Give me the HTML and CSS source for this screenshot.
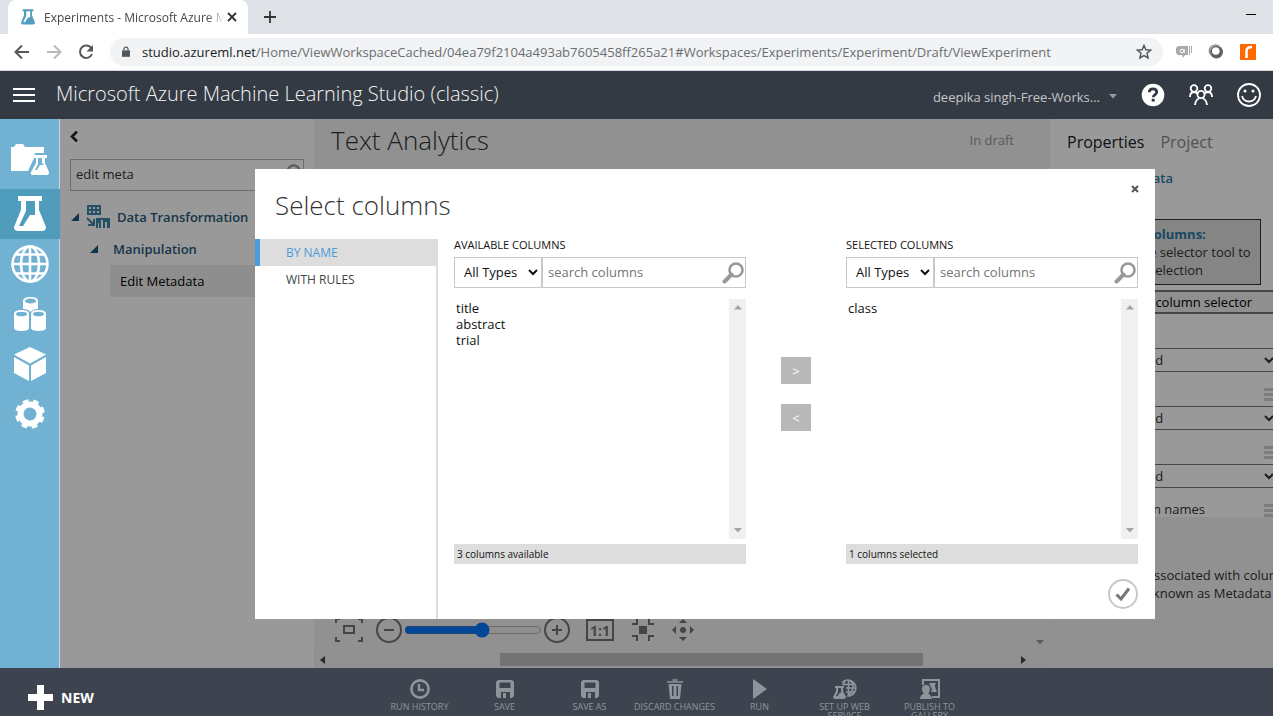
FILE: index.html
```html
<!DOCTYPE html>
<html lang="en">
<head>
    <meta charset="UTF-8">
    <meta name="viewport" content="width=device-width, initial-scale=1.0">
    <title>Experiments - Microsoft Azure Machine Learning Studio</title>
    <link rel="stylesheet" href="styles.css">
</head>
<body>

    <!-- Shared icons -->
    <svg class="sprite" aria-hidden="true">
        <symbol id="flask" viewBox="0 0 32 36">
            <path fill-rule="evenodd" d="M4 0h24v5h-3v9l7 17q0 4-4 4H4q-4 0-4-4l7-17V5H4zM12 5v10L5 30h4l7-11h5V5z"/>
        </symbol>
        <symbol id="globe" viewBox="0 0 38 38">
            <g fill="none" stroke="currentColor" stroke-width="2.6">
                <circle cx="19" cy="19" r="17.5"/>
                <ellipse cx="19" cy="19" rx="9" ry="17.5"/>
                <path d="M19 1v36M1.500 19h35M5 9.500h28M5 28.500h28"/>
            </g>
        </symbol>
        <symbol id="search" viewBox="0 0 22 22">
            <circle cx="14" cy="8" r="6.500" fill="none" stroke="currentColor" stroke-width="2.600"/>
            <path d="M9.500 12.500L2.500 19.500" stroke="currentColor" stroke-width="4" stroke-linecap="round"/>
        </symbol>
        <symbol id="disk" viewBox="0 0 18 18">
            <path fill-rule="evenodd" d="M2 0h14l2 2v14l-2 2h-2v-6H5v6H2l-2-2V2zM3.500 2.500v5.500h11V2.500zM7 13h3v5H7z"/>
        </symbol>
    </svg>

    <!-- Browser tabs -->
    <div class="tab-strip">
        <div class="tab">
            <svg class="tab-icon" width="14" height="16"><use href="#flask"/></svg>
            <span class="tab-title">Experiments - Microsoft Azure M</span>
            <button class="plain-btn" aria-label="Close tab">
                <svg width="10" height="10" viewBox="0 0 10 10"><path d="M1 1l8 8M9 1l-8 8" stroke="#333" stroke-width="1.800"/></svg>
            </button>
        </div>
        <button class="plain-btn new-tab" aria-label="New tab">
            <svg width="12" height="12" viewBox="0 0 12 12"><path d="M6 0v12M0 6h12" stroke="#333" stroke-width="1.800"/></svg>
        </button>
        <button class="plain-btn minimize" aria-label="Minimize">
            <svg width="10" height="2" viewBox="0 0 10 2"><path d="M0 .5h10" stroke="#000"/></svg>
        </button>
    </div>

    <!-- Browser toolbar -->
    <div class="toolbar">
        <button class="plain-btn" aria-label="Back">
            <svg width="16" height="16" viewBox="0 0 16 16"><path d="M15 8H2M8 1.500L1.500 8 8 14.500" fill="none" stroke="#54575b" stroke-width="2"/></svg>
        </button>
        <button class="plain-btn" aria-label="Forward">
            <svg width="16" height="16" viewBox="0 0 16 16"><path d="M1 8h13M8 1.500L14.500 8 8 14.500" fill="none" stroke="#bababa" stroke-width="2"/></svg>
        </button>
        <button class="plain-btn" aria-label="Reload">
            <svg width="16" height="16" viewBox="0 0 16 16"><path d="M13.500 4.500A6.200 6.200 0 1 0 14 10" fill="none" stroke="#54575b" stroke-width="2"/><path d="M15 1v6.500H8.500z" fill="#54575b"/></svg>
        </button>
        <div class="address-bar">
            <svg width="8" height="12" viewBox="0 0 10 14"><path d="M0 5h10v8H0z" fill="#54575b"/><path d="M2.500 5.500V3.500a2.500 2.500 0 0 1 5 0v2" fill="none" stroke="#54575b" stroke-width="1.500"/></svg>
            <span class="url"><b>studio.azureml.net</b>/Home/ViewWorkspaceCached/04ea79f2104a493ab7605458ff265a21#Workspaces/Experiments/Experiment/Draft/ViewExperiment</span>
            <svg width="16" height="16" viewBox="0 0 16 16"><path d="M8 1.500l1.900 4.300 4.700.4-3.600 3.100 1.100 4.600L8 11.500l-4.100 2.400L5 9.300 1.400 6.200l4.700-.4z" fill="none" stroke="#54575b" stroke-width="1.500"/></svg>
        </div>
        <svg class="ext" width="16" height="16" viewBox="0 0 16 16"><path d="M2 2h10v9H9l-2 3-1-3H2L0 9V4z" fill="#aaa"/><path d="M13.500 2v9M15.500 2v7" stroke="#aaa"/><circle cx="6" cy="7" r="1.800" fill="none" stroke="#fff"/><path d="M8.200 5v4" stroke="#fff"/></svg>
        <svg class="ext" width="16" height="16" viewBox="0 0 16 16"><circle cx="8.500" cy="8" r="6.500" fill="#606060"/><path d="M2.800 11A6 6 0 0 1 12 3" fill="none" stroke="#999" stroke-width="1.500"/><circle cx="7.800" cy="7" r="3.800" fill="#fff"/></svg>
        <svg class="ext" width="16" height="16" viewBox="0 0 16 16"><path d="M0 0h16v16H0z" fill="#ff6a00"/><path d="M6.500 14V7q0-4 5.500-4" fill="none" stroke="#fff" stroke-width="2.600"/></svg>
    </div>

    <!-- App header -->
    <header class="app-header">
        <button class="plain-btn" aria-label="Menu">
            <svg width="22" height="14" viewBox="0 0 22 14"><path d="M0 1h22M0 7h22M0 13h22" stroke="#fff" stroke-width="2"/></svg>
        </button>
        <h1>Microsoft Azure Machine Learning Studio (classic)</h1>
        <button class="plain-btn workspace-menu">deepika singh-Free-Works...
            <svg width="8" height="5" viewBox="0 0 8 5"><path d="M0 0h8L4 4.500z" fill="#999"/></svg>
        </button>
        <button class="plain-btn help" aria-label="Help">
            <svg width="24" height="24" viewBox="0 0 24 24"><circle cx="12" cy="12" r="11.300" fill="#fff"/><path d="M8.300 9.300q0-3.500 3.700-3.500t3.700 3.200q0 1.700-1.700 2.700t-1.700 2.500" fill="none" stroke="#343a43" stroke-width="2.800"/><path d="M10.700 15.800h3v2.800h-3z" fill="#343a43"/></svg>
        </button>
        <button class="plain-btn" aria-label="Community">
            <svg width="24" height="22" viewBox="0 0 24 22"><g fill="none" stroke="#fff" stroke-width="1.800"><circle cx="5" cy="4.500" r="3.300"/><circle cx="19" cy="4.500" r="3.300"/><circle cx="12" cy="10.500" r="3.600"/><path d="M1 13q0-4.500 3.500-5 3 0 4.500 2M23 13q0-4.500-3.500-5-3 0-4.500 2M6 21q.5-5 4-6.500M18 21q-.5-5-4-6.500"/></g></svg>
        </button>
        <button class="plain-btn" aria-label="Feedback">
            <svg width="24" height="24" viewBox="0 0 24 24"><circle cx="12" cy="12" r="11" fill="none" stroke="#fff" stroke-width="1.800"/><circle cx="8" cy="8" r="1.500" fill="#fff"/><circle cx="16" cy="8" r="1.500" fill="#fff"/><path d="M5 13q1.500 5.500 7 5.500t7-5.500" fill="none" stroke="#fff" stroke-width="1.800"/></svg>
        </button>
    </header>

    <div class="main">
        <!-- Icon rail -->
        <nav class="rail">
            <a href="#" class="projects" aria-label="Projects">
                <svg width="40" height="32" viewBox="0 0 40 32"><path d="M1 3h3l2-3h7l2 3h19v24H1z" fill="#fff"/><path d="M25 9h13v6l3 13-2 4H19l-1-5 6-13z" fill="#71b1d1"/><path fill-rule="evenodd" d="M24 11h13v3h-2v5l4 9q0 3-2 3H23q-3 0-2-3l5-9v-5h-2zM28 14v6l-3 6h2l3-5h4l-2-2v-5z" fill="#fff"/></svg>
            </a>
            <a href="#" class="active" aria-label="Experiments"><svg width="32" height="36"><use href="#flask"/></svg></a>
            <a href="#" aria-label="Web services"><svg width="38" height="38"><use href="#globe"/></svg></a>
            <a href="#" aria-label="Datasets">
                <svg width="32" height="36" viewBox="0 0 32 36"><g fill="#fff"><path d="M9 5q0-4 7.500-4T24 5v8q-5 0-7.500 3Q14 13 9 13z"/><path d="M0 18q0-4 7.500-4t7.500 4v14q0 3-7.500 3T0 32zM17 18q0-4 7.500-4t7.500 4v14q0 3-7.500 3T17 32z"/></g><g fill="#71b1d1"><ellipse cx="16.500" cy="5" rx="5.500" ry="2.500"/><ellipse cx="7.500" cy="18" rx="5.500" ry="2.300"/><ellipse cx="24.500" cy="18" rx="5.500" ry="2.300"/></g></svg>
            </a>
            <a href="#" aria-label="Trained models">
                <svg width="32" height="34" viewBox="0 0 32 34"><path d="M16 0l16 7.500L16 16.500 0 7.500zM0 10l15 8.500V34L0 26zM32 10l-15 8.500V34l15-8z" fill="#fff"/></svg>
            </a>
            <a href="#" aria-label="Settings">
                <svg width="30" height="30" viewBox="0 0 30 30"><g transform="rotate(12 15 15)"><circle cx="15" cy="15" r="9.500" fill="none" stroke="#fff" stroke-width="6"/><circle cx="15" cy="15" r="12.800" fill="none" stroke="#fff" stroke-width="4" stroke-dasharray="5.600 4.450"/></g></svg>
            </a>
        </nav>

        <div class="workspace">
            <!-- Module palette -->
            <aside class="palette">
                <button class="plain-btn collapse" aria-label="Collapse">
                    <svg width="8" height="11" viewBox="0 0 8 11"><path d="M7 .5L2 5.500l5 5" fill="none" stroke="#222" stroke-width="2.600"/></svg>
                </button>
                <div class="palette-search">
                    <input type="text" value="edit meta" aria-label="Search experiment items">
                    <svg width="20" height="20"><use href="#search"/></svg>
                </div>
                <ul class="tree">
                    <li class="tree-group">
                        <svg width="8" height="8" viewBox="0 0 8 8"><path d="M8 0v8H0z" fill="#19597a"/></svg>
                        <svg width="24" height="24" viewBox="0 0 24 24" class="group-icon"><path fill-rule="evenodd" d="M1 0h14v10H1zM3 2v2h2V2zM7 2v2h2V2zM11 2v2h2V2zM3 6v2h2V6zM7 6v2h2V6zM11 6v2h2V6zM10 13h14v10h-3v-6h-2v6h-2v-8h-2v8h-2v-5h-1v5h-2z"/><path d="M1 13l6 6M8 14v6H2" fill="none" stroke="#3f88aa" stroke-width="2"/></svg>
                        Data Transformation
                    </li>
                    <li class="tree-sub">
                        <svg width="8" height="8" viewBox="0 0 8 8"><path d="M8 0v8H0z" fill="#19597a"/></svg>
                        Manipulation
                    </li>
                    <li class="tree-leaf">Edit Metadata</li>
                </ul>
            </aside>

            <!-- Experiment canvas -->
            <section class="canvas">
                <div class="canvas-head">
                    <h2>Text Analytics</h2>
                    <span>In draft</span>
                </div>
                <div class="zoom-bar">
                    <button class="plain-btn" aria-label="Fit to screen">
                        <svg width="28" height="24" viewBox="0 0 28 24"><path d="M1 5V1h4M23 1h4v4M27 19v4h-4M5 23H1v-4M9 8h10v7H9z" fill="none" stroke="#737373" stroke-width="2"/></svg>
                    </button>
                    <button class="plain-btn zoom-out" aria-label="Zoom out">
                        <svg width="26" height="26" viewBox="0 0 26 26"><circle cx="13" cy="13" r="12" fill="none" stroke="#737373" stroke-width="2"/><path d="M8 13h10" stroke="#737373" stroke-width="2"/></svg>
                    </button>
                    <input type="range" min="0" max="100" value="57" aria-label="Zoom">
                    <button class="plain-btn" aria-label="Zoom in">
                        <svg width="26" height="26" viewBox="0 0 26 26"><circle cx="13" cy="13" r="12" fill="none" stroke="#737373" stroke-width="2"/><path d="M8 13h10M13 8v10" stroke="#737373" stroke-width="2"/></svg>
                    </button>
                    <button class="plain-btn actual-size">1:1</button>
                    <button class="plain-btn center-btn" aria-label="Center">
                        <svg width="22" height="22" viewBox="0 0 22 22"><path d="M7 7h8v8H7z" fill="#737373"/><path d="M5 0v5H0M17 0v5h5M0 17h5v5M22 17h-5v5" fill="none" stroke="#737373" stroke-width="2"/></svg>
                    </button>
                    <button class="plain-btn" aria-label="Pan">
                        <svg width="22" height="22" viewBox="0 0 22 22"><circle cx="11" cy="11" r="3" fill="#737373"/><path d="M7 4l4-4 4 4zM7 18l4 4 4-4zM4 7l-4 4 4 4zM18 7l4 4-4 4z" fill="#737373"/></svg>
                    </button>
                    <svg class="scroll-down" width="8" height="5" viewBox="0 0 8 5"><path d="M0 0h8L4 4.500z" fill="#999"/></svg>
                </div>
                <div class="h-scroll">
                    <svg width="5" height="8" viewBox="0 0 5 8"><path d="M5 0v8L0 4z" fill="#444"/></svg>
                    <div class="h-thumb"></div>
                    <svg width="5" height="8" viewBox="0 0 5 8"><path d="M0 0v8l5-4z" fill="#444"/></svg>
                </div>
            </section>

            <!-- Properties -->
            <aside class="properties">
                <div class="prop-form">
                    <div class="prop-tabs"><a href="#" class="current">Properties</a><a href="#">Project</a></div>
                    <h3>Edit Metadata</h3>
                    <div class="hint"><b>Selected columns:</b><br>Launch the selector tool to<br>make the selection</div>
                    <button class="launch">Launch column selector</button>
                    <div class="field">
                        <select aria-label="Data type"><option>Unchanged</option></select>
                        <span class="grip"></span>
                    </div>
                    <div class="field">
                        <select aria-label="Categorical"><option>Unchanged</option></select>
                        <span class="grip"></span>
                    </div>
                    <div class="field">
                        <select aria-label="Fields"><option>Unchanged</option></select>
                        <span class="grip"></span>
                    </div>
                    <p class="names">New column names</p>
                </div>
                <p class="about">All metadata associated with columns<br>(or previously known as Metadata</p>
            </aside>

            <div class="overlay"></div>

            <!-- Select columns dialog -->
            <div class="dialog" role="dialog" aria-labelledby="dialog-title">
                <div class="dialog-head">
                    <h2 id="dialog-title">Select columns</h2>
                    <button class="plain-btn" aria-label="Close">
                        <svg width="8" height="8" viewBox="0 0 8 8"><path d="M1 1l6 6M7 1L1 7" stroke="#555" stroke-width="2"/></svg>
                    </button>
                </div>
                <div class="dialog-body">
                    <nav class="dialog-nav">
                        <a href="#" class="active">BY NAME</a>
                        <a href="#">WITH RULES</a>
                    </nav>
                    <div class="picker">
                        <div class="column-box">
                            <label for="available">AVAILABLE COLUMNS</label>
                            <div class="filter">
                                <select aria-label="Available column type"><option>All Types</option></select>
                                <input type="text" placeholder="search columns" aria-label="Search available columns">
                                <svg width="22" height="22"><use href="#search"/></svg>
                            </div>
                            <div class="list">
                                <select id="available" multiple>
                                    <option>title</option>
                                    <option>abstract</option>
                                    <option>trial</option>
                                </select>
                                <div class="v-scroll">
                                    <svg width="8" height="5" viewBox="0 0 8 5"><path d="M0 4.500h8L4 0z" fill="#a3a3a3"/></svg>
                                    <svg width="8" height="5" viewBox="0 0 8 5"><path d="M0 0h8L4 4.500z" fill="#a3a3a3"/></svg>
                                </div>
                            </div>
                            <p class="count">3 columns available</p>
                        </div>
                        <div class="move">
                            <button>&gt;</button>
                            <button>&lt;</button>
                        </div>
                        <div class="column-box">
                            <label for="selected">SELECTED COLUMNS</label>
                            <div class="filter">
                                <select aria-label="Selected column type"><option>All Types</option></select>
                                <input type="text" placeholder="search columns" aria-label="Search selected columns">
                                <svg width="22" height="22"><use href="#search"/></svg>
                            </div>
                            <div class="list">
                                <select id="selected" multiple>
                                    <option>class</option>
                                </select>
                                <div class="v-scroll">
                                    <svg width="8" height="5" viewBox="0 0 8 5"><path d="M0 4.500h8L4 0z" fill="#a3a3a3"/></svg>
                                    <svg width="8" height="5" viewBox="0 0 8 5"><path d="M0 0h8L4 4.500z" fill="#a3a3a3"/></svg>
                                </div>
                            </div>
                            <p class="count">1 columns selected</p>
                            <button class="plain-btn confirm" aria-label="OK">
                                <svg width="30" height="30" viewBox="0 0 30 30"><circle cx="15" cy="15" r="14" fill="none" stroke="#c8c8c8" stroke-width="2"/><path d="M8.500 15.500l4.500 4.500L21 9.500" fill="none" stroke="#777" stroke-width="3"/></svg>
                            </button>
                        </div>
                    </div>
                </div>
            </div>
        </div>
    </div>

    <!-- Command bar -->
    <footer class="command-bar">
        <button class="plain-btn new-btn">
            <svg width="25" height="25" viewBox="0 0 25 25"><path d="M9 0h7v9h9v7h-9v9H9v-9H0V9h9z" fill="#fff"/></svg>
            NEW
        </button>
        <div class="commands">
            <button><svg width="20" height="20" viewBox="0 0 20 20"><circle cx="10" cy="10" r="8.600" fill="none" stroke="currentColor" stroke-width="2.600"/><path d="M9 5v6h5" fill="none" stroke="currentColor" stroke-width="2.400"/></svg>RUN HISTORY</button>
            <button><svg width="18" height="20"><use href="#disk"/></svg>SAVE</button>
            <button><svg width="18" height="20"><use href="#disk"/></svg>SAVE AS</button>
            <button><svg width="16" height="20" viewBox="0 0 16 20"><path d="M5.500 1h5M0 3h16" stroke="currentColor" stroke-width="1.600"/><path fill-rule="evenodd" d="M1.500 5h13L13 20H3zM5 7v10h1.500V7zM9.500 7v10H11V7z"/></svg>DISCARD CHANGES</button>
            <button><svg width="14" height="20" viewBox="0 0 14 20"><path d="M0 0l14 10L0 20z"/></svg>RUN</button>
            <button><svg width="24" height="20" viewBox="0 0 24 20"><g fill="none" stroke="currentColor" stroke-width="1.600"><path d="M9 3.500A8 8 0 1 1 14 17M12 1.500q-1 2-1 4M16 1q5 3 4 8t-4 7.500M15.500 1v16M9 5.500h13M13 9h10M13 13h9"/></g><path fill-rule="evenodd" d="M2 7h9v2h-1v3l3 6q0 2-2 2H2q-2 0-2-2l3-6V9H2zM5 9v4l-2 4h1.500L7 13.500h1.500L8 12V9z"/></svg>SET UP WEB SERVICE</button>
            <button><svg width="20" height="20" viewBox="0 0 20 20"><path d="M3 6V1h16v17h-7" fill="none" stroke="currentColor" stroke-width="2"/><path d="M9 4h7v1h-1v3l2 5h-6l1-3zM2 10q0-4 4-4t4 4q0 3-2 4.500 3 1 4 5.500H0q0-4 4-5.500Q2 13 2 10z"/></svg>PUBLISH TO GALLERY</button>
        </div>
    </footer>

</body>
</html>
```

FILE: styles.css
```css
/* Reset */
* {
    margin: 0;
    padding: 0;
    box-sizing: border-box;
}

body {
    font-family: 'Segoe UI', 'Open Sans', 'Noto Sans', sans-serif;
    font-size: 13px;
    color: #333;
    height: 100vh;
    display: flex;
    flex-direction: column;
    overflow: hidden;
}

button,
input,
select {
    font-family: inherit;
    font-size: 13px;
    color: inherit;
}

a {
    color: inherit;
    text-decoration: none;
}

svg {
    display: block;
    flex: none;
    fill: currentColor;
}

.sprite {
    position: absolute;
    width: 0;
    height: 0;
}

.plain-btn {
    display: flex;
    align-items: center;
    background: none;
    border: none;
    cursor: pointer;
}

/* Browser tabs */
.tab-strip {
    display: flex;
    align-items: flex-end;
    height: 34px;
    flex: none;
    padding: 0 17px 0 8px;
    background: #dee1e6;
}

.tab {
    display: flex;
    align-items: center;
    gap: 2px;
    width: 240px;
    height: 34px;
    padding: 0 11px 0 13px;
    background: #fff;
    border-radius: 8px 8px 0 0;
}

.tab-icon {
    margin-right: 7px;
    color: #4f9cbd;
}

.tab-title {
    flex: 1;
    overflow: hidden;
    white-space: nowrap;
    font-size: 12px;
    color: #45474a;
    -webkit-mask-image: linear-gradient(to right, #000 90%, transparent);
    mask-image: linear-gradient(to right, #000 90%, transparent);
}

.new-tab {
    height: 34px;
    margin-left: 16px;
}

.minimize {
    height: 34px;
    margin-left: auto;
    padding-bottom: 4px;
}

/* Browser toolbar */
.toolbar {
    display: flex;
    align-items: center;
    gap: 16px;
    height: 37px;
    flex: none;
    padding: 0 17px 0 14px;
    background: #fff;
    border-bottom: 1px solid #d5d8dc;
}

.address-bar {
    display: flex;
    align-items: center;
    gap: 12px;
    flex: 1;
    min-width: 0;
    height: 28px;
    padding: 0 11px 0 12px;
    margin-right: -3px;
    background: #f1f3f4;
    border-radius: 14px;
}

.url {
    flex: 1;
    overflow: hidden;
    white-space: nowrap;
    font-size: 13px;
    color: #6b6e72;
}

.url b {
    font-weight: 400;
    color: #202124;
}

/* App header */
.app-header {
    display: flex;
    align-items: center;
    gap: 24px;
    height: 48px;
    flex: none;
    padding: 0 12px 0 13px;
    background: #343a43;
    color: #f2f2f2;
}

.app-header h1 {
    flex: 1;
    margin-left: -3px;
    padding-bottom: 3px;
    font-size: 20px;
    font-weight: 300;
    white-space: nowrap;
}

.workspace-menu {
    gap: 9px;
    padding-top: 3px;
    color: #c4c6c9;
    white-space: nowrap;
}

.main {
    display: flex;
    flex: 1;
    min-height: 0;
}

/* Icon rail */
.rail {
    width: 60px;
    flex: none;
    padding-top: 20px;
    background: #71b1d1;
    border-right: 1px solid #c5d8e2;
    color: #fff;
}

.rail a {
    display: flex;
    align-items: center;
    justify-content: center;
    height: 50px;
}

.rail .projects {
    padding-bottom: 8px;
}

.rail a.active {
    margin-right: -1px;
    background: #4f9cbd;
}

.workspace {
    position: relative;
    display: flex;
    flex: 1;
    min-width: 0;
    overflow: hidden;
}

/* Module palette */
.palette {
    width: 254px;
    flex: none;
    padding-top: 12px;
    background: #fff;
}

.collapse {
    margin-left: 10px;
}

.palette-search {
    display: flex;
    height: 32px;
    margin: 17px 10px 10px;
    padding-right: 2px;
    border: 1px solid #b8b8b8;
    color: #999;
}

.palette-search input {
    flex: 1;
    min-width: 0;
    padding: 0 0 2px 5px;
    border: none;
    outline: none;
    color: #333;
}

.palette-search svg {
    margin-top: 4px;
}

.tree {
    list-style: none;
    color: #28597a;
}

.tree li {
    display: flex;
    align-items: center;
    height: 32px;
    white-space: nowrap;
    font-weight: 600;
}

.tree .tree-group {
    gap: 7px;
    padding-left: 11px;
}

.group-icon {
    color: #3f88aa;
}

.tree .tree-sub {
    gap: 15px;
    padding-left: 30px;
}

.tree .tree-leaf {
    margin-left: 50px;
    padding-left: 10px;
    background: #ededed;
    color: #000;
    font-weight: 400;
}

/* Experiment canvas */
.canvas {
    display: flex;
    flex-direction: column;
    flex: 1;
    min-width: 0;
    background: #f2f2f2;
}

.canvas-head {
    display: flex;
    align-items: center;
    justify-content: space-between;
    height: 41px;
    padding: 0 35px 0 17px;
    color: #999;
}

.canvas-head h2 {
    font-size: 26px;
    font-weight: 300;
    color: #333;
}

.zoom-bar {
    display: flex;
    align-items: center;
    margin-top: auto;
    padding: 0 5px 0 21px;
    height: 42px;
}

.zoom-out {
    margin-left: 13px;
}

.zoom-bar input {
    width: 138px;
    margin: 0 2px;
}

.actual-size {
    justify-content: center;
    width: 28px;
    height: 22px;
    margin: 0 18px 0 16px;
    border: 2px solid #737373;
    font-size: 14px;
    font-weight: 700;
    color: #737373;
}

.center-btn {
    margin-right: 18px;
}

.scroll-down {
    margin: 24px 0 0 auto;
}

.h-scroll {
    display: flex;
    align-items: center;
    gap: 175px;
    height: 17px;
    padding: 0 23px 0 6px;
    background: #f0f0f0;
}

.h-thumb {
    flex: 1;
    height: 13px;
    margin-right: -77px;
    background: #c0c0c0;
}

/* Properties */
.properties {
    display: flex;
    flex-direction: column;
    width: 224px;
    flex: none;
    background: #f2f2f2;
    border-left: 1px solid #eee;
    white-space: nowrap;
}

.prop-form {
    height: 398px;
    padding-left: 17px;
    background: #fff;
}

.prop-tabs {
    display: flex;
    gap: 16px;
    padding-top: 11px;
    font-size: 16px;
    line-height: 24px;
    color: #8a8a8a;
}

.prop-tabs .current {
    color: #222;
}

.properties h3 {
    margin: 15px 0 32px;
    padding-left: 18px;
    font-size: 13px;
    line-height: 18px;
    font-weight: 600;
    color: #2a7ca5;
}

.hint {
    height: 66px;
    margin-right: 12px;
    padding: 5px 0 5px 21px;
    line-height: 18px;
    background: #dedede;
    border: 1px solid #333;
}

.hint b {
    color: #2a7ca5;
}

.launch {
    display: block;
    width: 226px;
    height: 24px;
    margin: 5px 0 34px;
    background: #eee;
    border: 2px solid #767676;
    color: #000;
}

.field {
    position: relative;
    height: 58px;
}

.field select {
    width: 211px;
    height: 24px;
    padding-left: 22px;
    background: #fff;
    border: 1px solid #767676;
    border-radius: 0;
}

.grip {
    position: absolute;
    top: 40px;
    right: 0;
    width: 9px;
    height: 13px;
    background: repeating-linear-gradient(to bottom, #cfcfcf 0 3px, #fff 3px 5px);
}

.names {
    margin-top: -22px;
    padding-left: 18px;
}

.about {
    padding: 49px 0 0 17px;
    overflow: hidden;
    line-height: 18px;
}

.overlay {
    position: absolute;
    inset: 0;
    background: rgba(0, 0, 0, 0.4);
}

/* Dialog */
.dialog {
    position: absolute;
    top: 50px;
    left: 195px;
    display: flex;
    flex-direction: column;
    width: 900px;
    height: 450px;
    background: #fff;
}

.dialog-head {
    display: flex;
    align-items: flex-start;
    justify-content: space-between;
    height: 70px;
    padding: 16px 16px 0 20px;
}

.dialog-head h2 {
    font-size: 26px;
    line-height: 40px;
    font-weight: 300;
    color: #333;
}

.dialog-body {
    display: flex;
    flex: 1;
    min-height: 0;
}

.dialog-nav {
    width: 183px;
    border-right: 2px solid #ddd;
    font-size: 12px;
    line-height: 27px;
    color: #444;
}

.dialog-nav a {
    display: block;
    padding-left: 26px;
    border-left: 5px solid transparent;
}

.dialog-nav .active {
    background: #ddd;
    border-left-color: #4d9bd8;
    color: #4d9bd8;
}

.picker {
    display: flex;
    flex: 1;
    padding: 0 17px 0 16px;
}

.column-box {
    flex: 1;
    display: flex;
    flex-direction: column;
    min-width: 0;
}

.column-box label {
    font-size: 11px;
    line-height: 12px;
    margin-bottom: 6px;
    color: #111;
}

.filter {
    display: flex;
    align-items: center;
    height: 31px;
    padding-right: 1px;
    border: 1px solid #c8c8c8;
    color: #999;
}

.filter select {
    width: 88px;
    height: 29px;
    padding: 0 0 2px 5px;
    background: #fff;
    border: none;
    border-right: 2px solid #c8c8c8;
    border-radius: 0;
    color: #111;
}

.filter input {
    flex: 1;
    min-width: 0;
    padding: 0 0 2px 5px;
    border: none;
    outline: none;
    color: #333;
}

.filter input::placeholder {
    color: #757575;
}

.list {
    display: flex;
    height: 240px;
    margin: 11px 0 5px;
}

.list select {
    flex: 1;
    min-width: 0;
    border: none;
    outline: none;
    overflow: hidden;
    color: #111;
}

.list option {
    height: 16px;
    min-height: 16px;
    line-height: 13px;
    padding: 0 2px;
}

.v-scroll {
    display: flex;
    flex-direction: column;
    align-items: center;
    justify-content: space-between;
    width: 17px;
    padding: 6px 0;
    background: #f0f0f0;
}

.count {
    padding-left: 3px;
    font-size: 10px;
    line-height: 20px;
    background: #ddd;
    color: #111;
}

.move {
    display: flex;
    flex-direction: column;
    align-items: center;
    gap: 20px;
    width: 100px;
    padding-top: 118px;
}

.move button {
    width: 30px;
    height: 27px;
    background: #b8b8b8;
    border: none;
    color: #fff;
}

.confirm {
    align-self: flex-end;
    margin-top: 15px;
}

/* Command bar */
.command-bar {
    display: flex;
    height: 48px;
    flex: none;
    padding-left: 28px;
    overflow: hidden;
    background: #3e444f;
}

.new-btn {
    width: 349px;
    gap: 8px;
    padding-top: 11px;
    font-size: 14px;
    font-weight: 700;
    color: #fff;
}

.commands {
    display: flex;
    align-items: flex-start;
}

.commands button {
    display: flex;
    flex-direction: column;
    align-items: center;
    gap: 3px;
    width: 85px;
    padding: 11px 2px 0;
    background: none;
    border: none;
    font-size: 9px;
    line-height: 9px;
    color: #8f949b;
    cursor: pointer;
}
```
